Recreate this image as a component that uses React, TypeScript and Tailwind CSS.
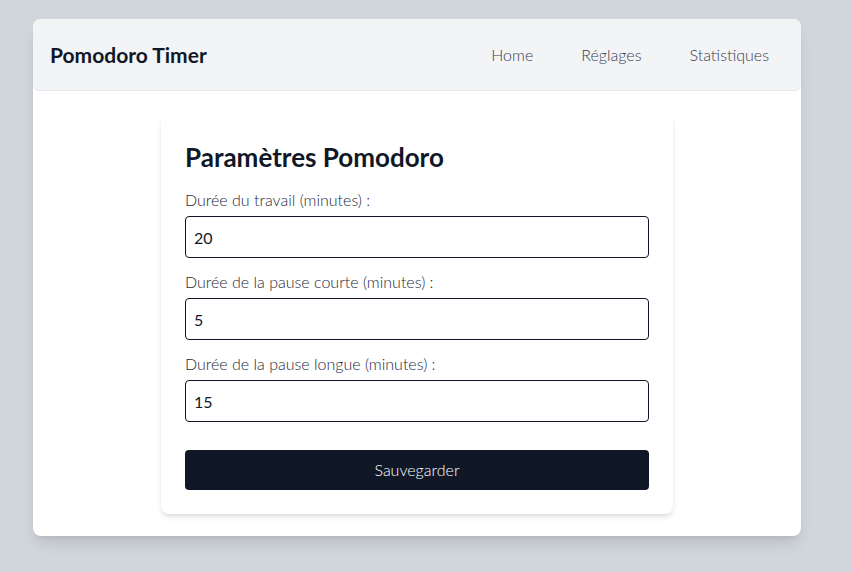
import { useState } from "react";

const Field = ({
  label,
  value,
  onChange,
}: {
  label: string;
  value: string;
  onChange: (v: string) => void;
}) => (
  <div className="mb-3">
    <label className="block text-[16px] font-light text-gray-800 leading-6 mb-1">
      {label}
    </label>
    <input
      type="number"
      value={value}
      onChange={(e) => onChange(e.target.value)}
      className="block w-full h-[42px] px-2 border border-gray-900 rounded text-[16px] text-gray-900 outline-none"
    />
  </div>
);

export default function App() {
  const [work, setWork] = useState("20");
  const [short, setShort] = useState("5");
  const [long, setLong] = useState("15");

  return (
    <div
      className="min-h-[572px] bg-gray-300 pt-[19px] pl-[33px]"
      style={{ fontFamily: "Lato, 'Noto Sans', sans-serif" }}
    >
      <div className="w-[768px] bg-white rounded-lg shadow-lg overflow-hidden">
        <header className="h-[72px] bg-gray-100 border-b border-gray-200 rounded-b-md flex items-center justify-between pl-[17px] pr-8">
          <h1 className="text-[21px] font-bold text-gray-900">Pomodoro Timer</h1>
          <nav className="flex gap-12 text-[16px] font-light text-gray-700">
            <a href="#">Home</a>
            <a href="#">Réglages</a>
            <a href="#">Statistiques</a>
          </nav>
        </header>
        <main className="pt-[22px] pb-[22px]">
          <div className="w-[512px] mx-auto bg-white rounded-lg shadow-md p-6">
            <h2 className="text-[26px] font-bold text-gray-900 mb-[11px] leading-10">
              Paramètres Pomodoro
            </h2>
            <Field label="Durée du travail (minutes) :" value={work} onChange={setWork} />
            <Field label="Durée de la pause courte (minutes) :" value={short} onChange={setShort} />
            <Field label="Durée de la pause longue (minutes) :" value={long} onChange={setLong} />
            <button className="mt-4 w-full h-10 bg-gray-900 text-white rounded text-[16px] font-light">
              Sauvegarder
            </button>
          </div>
        </main>
      </div>
    </div>
  );
}
